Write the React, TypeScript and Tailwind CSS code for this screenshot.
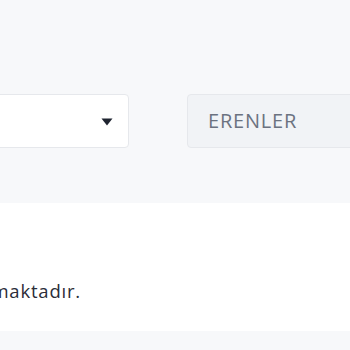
import React from "react";

export default function App() {
  return (
    <div className="w-[350px] h-[350px] overflow-hidden bg-[#f7f8fa]" style={{ fontFamily: "'Open Sans', 'Noto Sans', sans-serif" }}>
      <div className="h-[203px] pt-[94px]">
        <div className="flex gap-[58px] -ml-[100px]">
          <div className="w-[229px] h-[54px] shrink-0 bg-white border border-[#e6e8ec] rounded-[4px] flex items-center justify-end pr-[15px]">
            <svg width="12" height="8" viewBox="0 0 12 8" className="mt-[2px]">
              <path d="M0.5 0.5 H11.5 L6 7.5 Z" fill="#1f2430" />
            </svg>
          </div>
          <div className="w-[300px] h-[54px] shrink-0 bg-[#f1f3f6] border border-[#e6e8ec] rounded-[4px] flex items-center pl-[20px]">
            <span className="text-[20px] tracking-[0.8px] text-[#6b7280]">ERENLER</span>
          </div>
        </div>
      </div>
      <div className="h-[128px] bg-white pt-[76px]">
        <div className="w-[81px] flex justify-end whitespace-nowrap">
          <span className="text-[18.5px] tracking-[0.8px] leading-[24px] text-[#2b2d38]">Bu ürün stoklarımızda bulunmaktadır.</span>
        </div>
      </div>
    </div>
  );
}
